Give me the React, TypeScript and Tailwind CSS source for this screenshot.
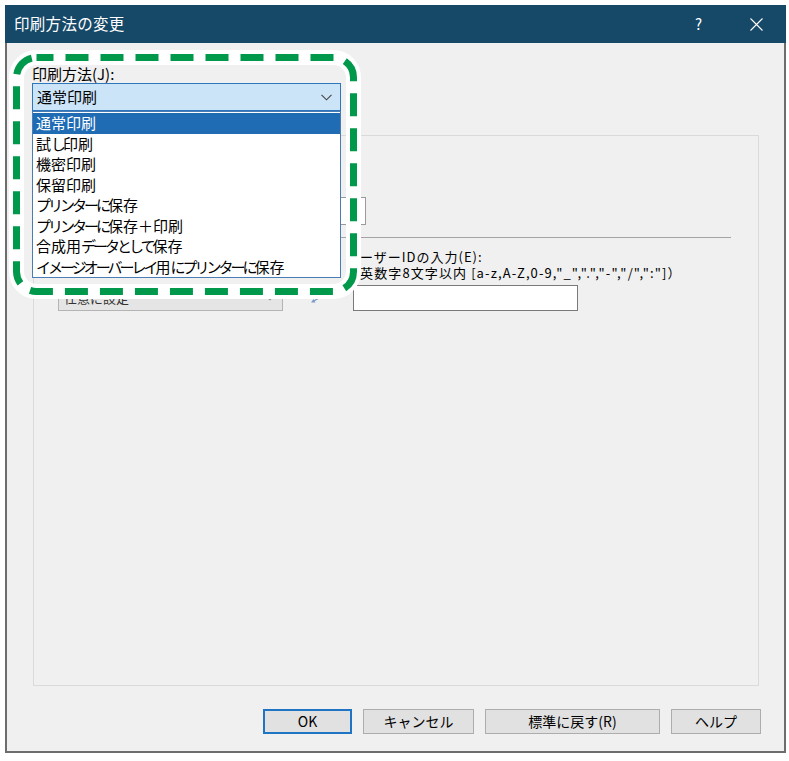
import React from 'react';

const font = "font-['Noto_Sans_CJK_JP','Noto_Sans',sans-serif]";

const methods = [
  '通常印刷',
  '試し印刷',
  '機密印刷',
  '保留印刷',
  'プリンターに保存',
  'プリンターに保存＋印刷',
  '合成用データとして保存',
  'イメージオーバーレイ用にプリンターに保存',
];

// kana in the original UI font is much narrower than kanji
const Narrow: React.FC<{ text: string }> = ({ text }) => {
  const parts = text.match(/[\u3040-\u30ff]+|[^\u3040-\u30ff]+/g) || [];
  return (
    <>
      {parts.map((p, i) =>
        /[\u3040-\u30ff]/.test(p) ? (
          <span key={i} className="tracking-[-3px]">
            {p}
          </span>
        ) : (
          <span key={i}>{p}</span>
        )
      )}
    </>
  );
};

const Chevron: React.FC<{ small?: boolean }> = ({ small }) => (
  <svg width={small ? 8 : 11} height={small ? 5 : 7} viewBox="0 0 11 7" fill="none">
    <polyline points="0.5,0.8 5.5,5.8 10.5,0.8" stroke={small ? '#777' : '#444'} strokeWidth="1.1" />
  </svg>
);

// dashed green callout drawn over the dialog
const Callout: React.FC = () => (
  <svg className="absolute left-0 top-0 pointer-events-none" width="789" height="761">
    <rect x="16.5" y="57.5" width="337" height="234" rx="20" fill="none" stroke="#ffffff" strokeWidth="15" />
    <rect x="16.5" y="57.5" width="337" height="234" rx="20" fill="none" stroke="#00984a" strokeWidth="7" strokeDasharray="23 12" strokeDashoffset="6" />
  </svg>
);

const Button: React.FC<{ w: string; primary?: boolean; children: React.ReactNode }> = ({ w, primary, children }) => (
  <button
    className={`${w} h-[25px] bg-[#e1e1e1] text-[14px] text-black flex items-center justify-center ${
      primary ? 'border-2 border-[#1f74c4]' : 'border border-[#adadad]'
    }`}
  >
    {children}
  </button>
);

export default function App() {
  return (
    <div className={`relative w-[789px] h-[761px] bg-white overflow-hidden ${font}`}>
      <div className="absolute left-[5px] top-[5px] w-[781px]">
        {/* Title bar */}
        <div className="h-[38px] bg-[#164868] flex items-center pl-[9px] pr-[23px] text-white">
          <span className="text-[15.5px] tracking-[0.3px]">印刷方法の変更</span>
          <span className="ml-auto text-[15px] mr-[48px]">?</span>
          <svg width="13" height="13" viewBox="0 0 13 13">
            <path d="M0.5 0.5 L12.5 12.5 M12.5 0.5 L0.5 12.5" stroke="#ffffff" strokeWidth="1.1" />
          </svg>
        </div>

        {/* Body */}
        <div className="bg-[#f0f0f0] border-x-2 border-b-2 border-[#6d6d6d] pl-[26px] pr-[25px] pt-[22px] pb-[17px] flex flex-col">
          <div className="ml-[-1px] h-[18px] leading-[18px] text-[15px] text-black">
            <Narrow text="印刷方法(J):" />
          </div>

          {/* Combo with open list */}
          <div className="relative ml-[-1px] w-[309px]">
            <div className="h-[28px] bg-[#cce4f7] border border-[#2f77bd] flex items-center pl-[4px] pr-[8px] text-[15px] text-black">
              <span>通常印刷</span>
              <span className="ml-auto mt-[1px]">
                <Chevron />
              </span>
            </div>
            <div className="absolute left-0 top-full w-[309px] h-[167px] bg-white border border-[#4a7cb5] pt-[1px] z-10">
              {methods.map((m, i) => (
                <div
                  key={m}
                  className={`h-[20.5px] leading-[20.5px] pl-[3px] text-[15px] whitespace-nowrap ${
                    i === 0 ? 'bg-[#1f6cb4] text-white' : 'text-black'
                  }`}
                >
                  <Narrow text={m} />
                </div>
              ))}
            </div>
          </div>

          {/* Group panel */}
          <div className="mt-[24px] h-[551px] border border-[#dadada] pl-[24px] pr-[27px] pt-[61px] text-[14px] text-black">
            <div className="w-[308px] h-[28px] bg-white border border-[#9a9a9a]" />
            <div className="mt-[12px] h-px bg-[#a4a4a4]" />

            <div className="mt-[11px] flex">
              <div className="w-[225px] flex flex-col">
                <div className="h-[36px]" />
                <div className="h-[26px] bg-[#e5e5e5] border border-[#b4b4b4] flex items-center pl-[5px] pr-[8px] text-[13px] text-[#333]">
                  <span>任意に設定</span>
                  <span className="ml-auto">
                    <Chevron small />
                  </span>
                </div>
              </div>

              <div className="w-[66px] flex items-end justify-center pb-[8px]">
                <svg width="11" height="7" viewBox="0 0 11 7">
                  <path d="M10.5 0.5 L2 5.5" stroke="#7b9bc8" strokeWidth="1.3" />
                  <path d="M0 6.5 L4.5 6.5 L2.5 3 Z" fill="#7b9bc8" />
                </svg>
              </div>

              <div className="flex flex-col text-[13px]">
                <p className="ml-[-3px] h-[32px] leading-[16px] whitespace-nowrap">
                  <span className="tracking-[1px]">ユーザーIDの入力(E):</span>
                  <br />
                  <span className="tracking-[1.1px]">（英数字8文字以内 [a-z,A-Z,0-9,"_",".","-","/",":"]）</span>
                </p>
                <div className="mt-[4px] ml-[4px] w-[225px] h-[26px] bg-white border border-[#7a7a7a]" />
              </div>
            </div>
          </div>

          {/* Buttons */}
          <div className="mt-[23px] flex justify-end mr-[-2px]">
            <div className="flex gap-[11px]">
              <Button w="w-[89px]" primary>
                OK
              </Button>
              <Button w="w-[111px]">キャンセル</Button>
              <Button w="w-[175px]">標準に戻す(R)</Button>
              <Button w="w-[90px]">ヘルプ</Button>
            </div>
          </div>
        </div>
      </div>

      <Callout />
    </div>
  );
}
